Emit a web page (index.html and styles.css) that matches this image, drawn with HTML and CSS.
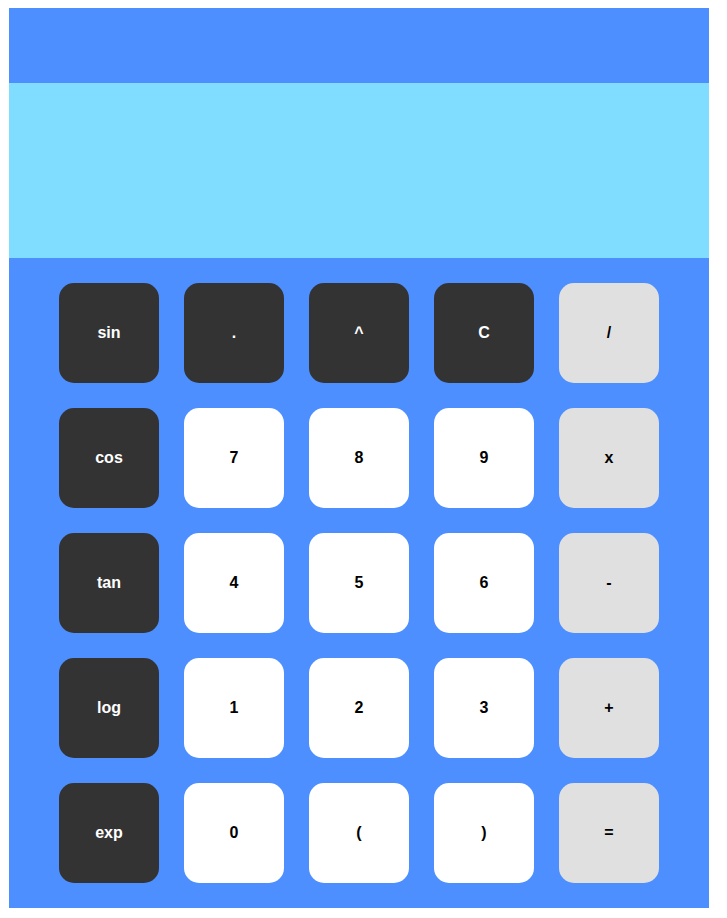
FILE: index.html
```html
<!DOCTYPE html>
<html>
<head>
<meta charset="utf-8">
<link rel="stylesheet" href="styles.css">
</head>
<body>
<div class="calc">
  <div class="top"></div>
  <div class="display"></div>
  <div class="keys">
    <button class="key dark">sin</button>
    <button class="key dark">.</button>
    <button class="key dark">^</button>
    <button class="key dark">C</button>
    <button class="key op">/</button>
    <button class="key dark">cos</button>
    <button class="key">7</button>
    <button class="key">8</button>
    <button class="key">9</button>
    <button class="key op">x</button>
    <button class="key dark">tan</button>
    <button class="key">4</button>
    <button class="key">5</button>
    <button class="key">6</button>
    <button class="key op">-</button>
    <button class="key dark">log</button>
    <button class="key">1</button>
    <button class="key">2</button>
    <button class="key">3</button>
    <button class="key op">+</button>
    <button class="key dark">exp</button>
    <button class="key">0</button>
    <button class="key">(</button>
    <button class="key">)</button>
    <button class="key op">=</button>
  </div>
</div>
</body>
</html>
```
FILE: styles.css
```css
body {
  margin: 8px 8px 8px 9px;
  font-family: "Liberation Sans", Arial, sans-serif;
}
.calc {
  width: 700px;
  height: 900px;
  background: #4d8ffe;
  display: flex;
  flex-direction: column;
}
.top {
  height: 75px;
}
.display {
  height: 175px;
  background: #80ddff;
}
.keys {
  display: grid;
  grid-template-columns: repeat(5, 100px);
  grid-auto-rows: 100px;
  gap: 25px;
  padding: 25px 50px;
}
.key {
  border: none;
  border-radius: 15px;
  background: #ffffff;
  color: #000;
  font-family: "Liberation Sans", Arial, sans-serif;
  font-weight: bold;
  font-size: 16px;
  padding: 0;
  margin: 0;
}
.key.dark {
  background: #333333;
  color: #ffffff;
}
.key.op {
  background: #e0e0e0;
}
```
